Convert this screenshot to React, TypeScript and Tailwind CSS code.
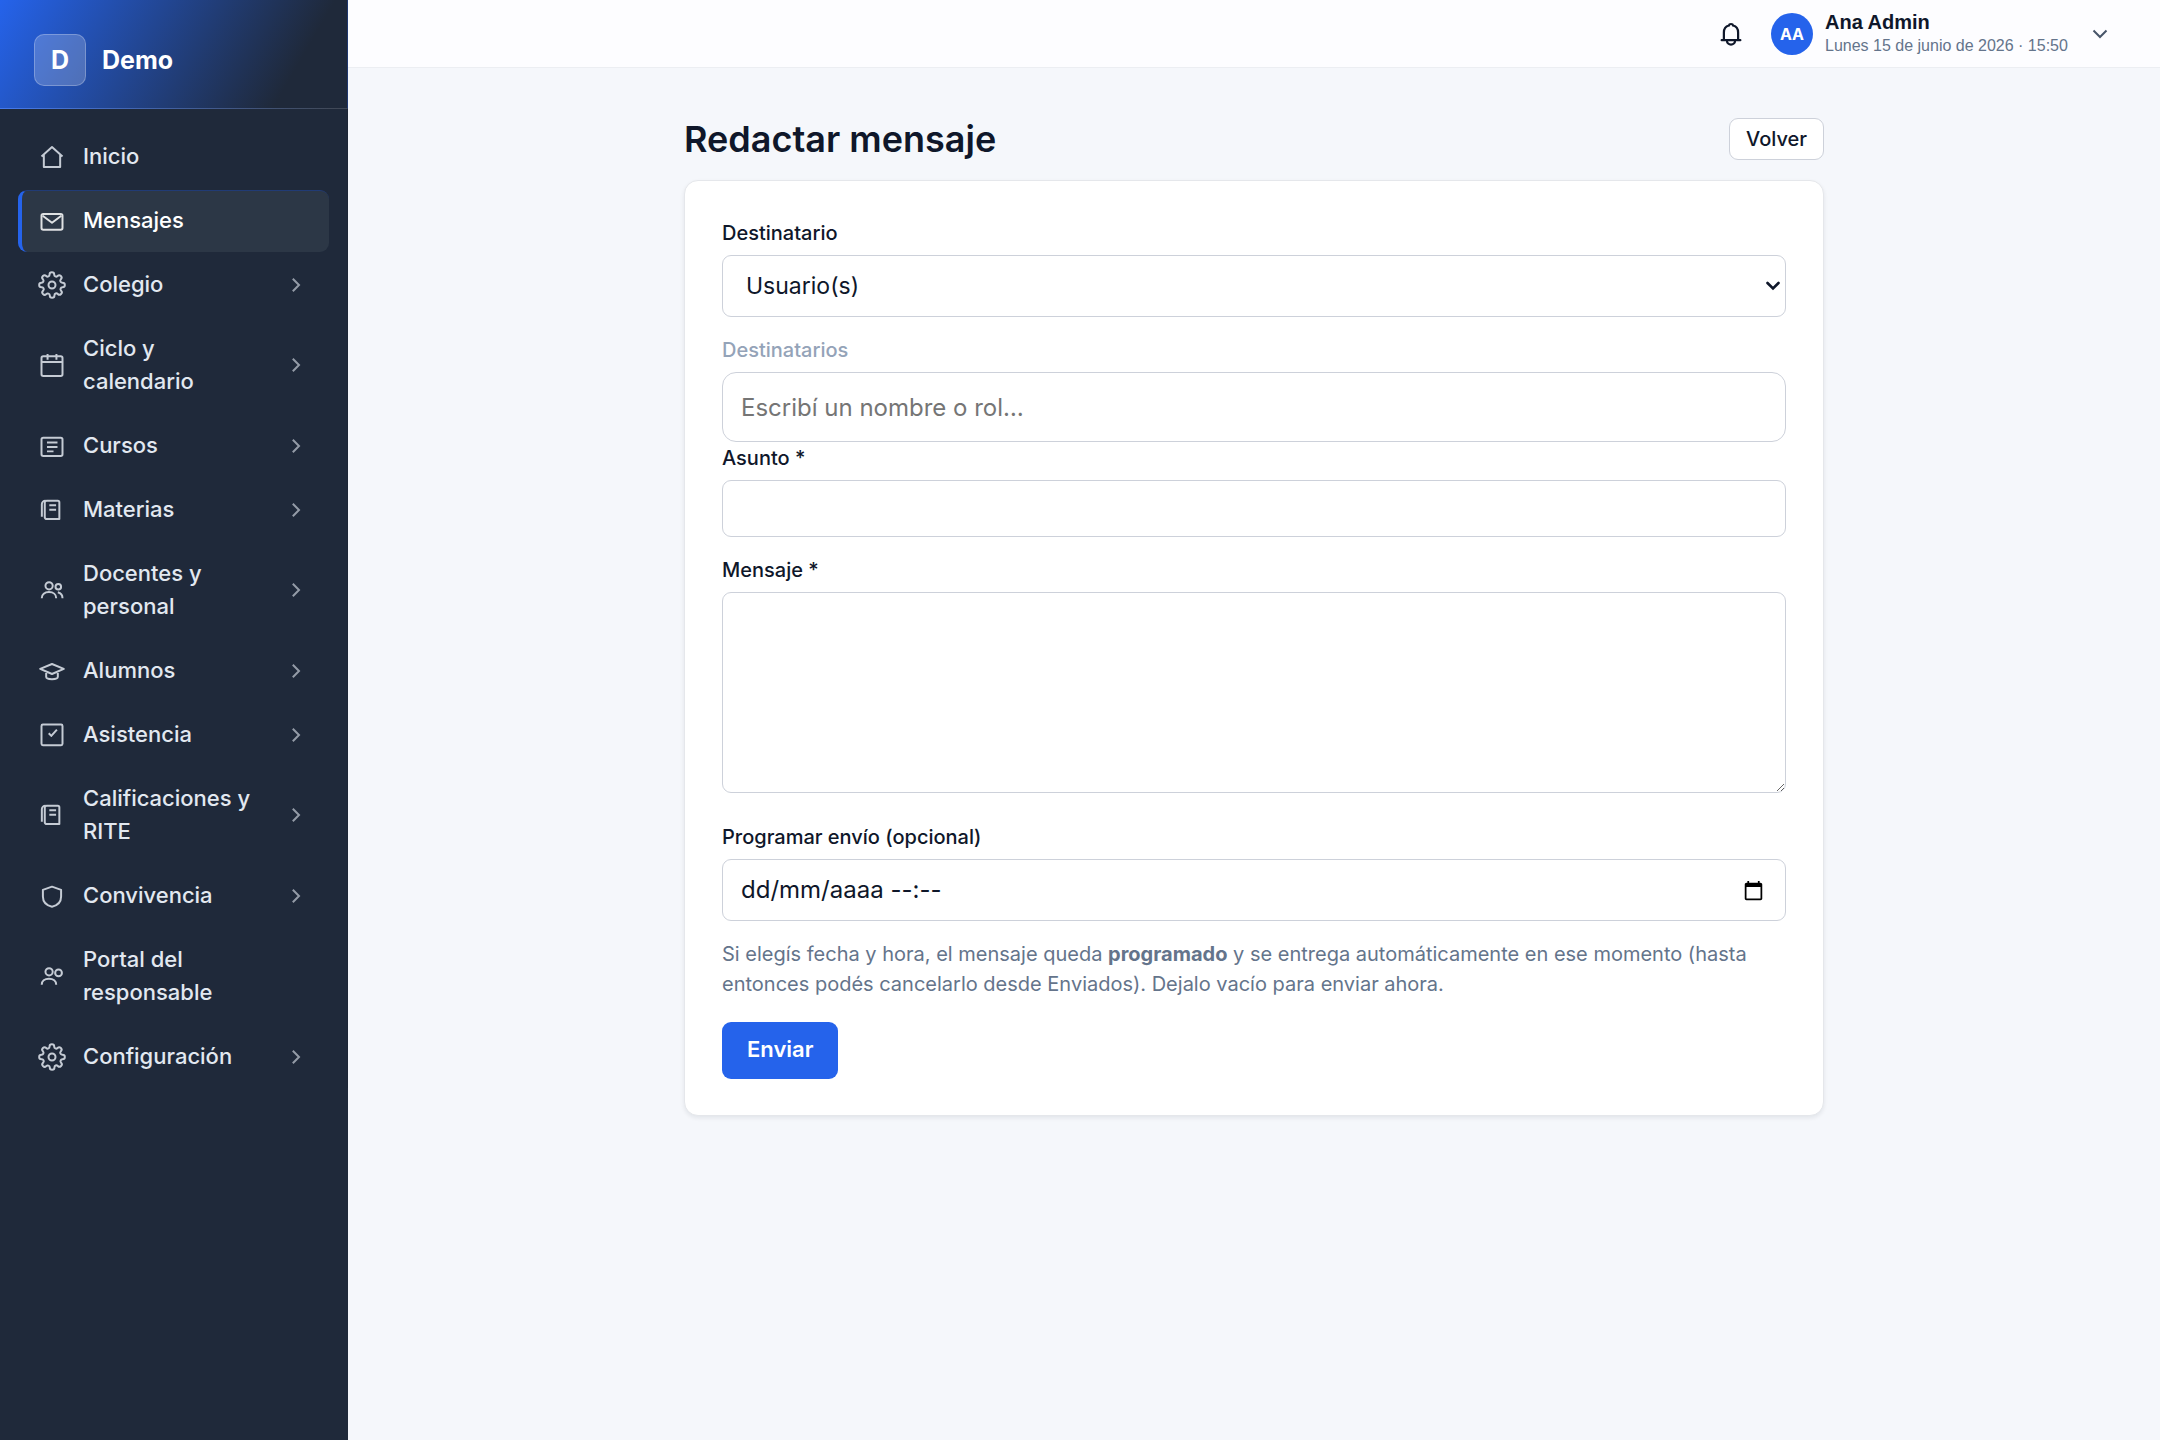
import React from 'react'

type IconName =
  | 'home' | 'mail' | 'gear' | 'calendar' | 'list' | 'book'
  | 'users' | 'cap' | 'check' | 'shield' | 'guardian'

const icons: Record<IconName, React.ReactNode> = {
  home: <path d="M3 11.5 12 3.5l9 8M5 10v10.5h14V10" />,
  mail: (
    <>
      <rect x="3" y="6" width="18" height="13.5" rx="1.5" />
      <path d="m4 7.5 8 6 8-6" />
    </>
  ),
  gear: (
    <>
      <circle cx="12" cy="12" r="3" />
      <path d="M19.4 15a1.65 1.65 0 0 0 .33 1.82l.06.06a2 2 0 0 1-2.83 2.83l-.06-.06a1.65 1.65 0 0 0-2.8 1.17V21a2 2 0 0 1-4 0v-.09A1.65 1.65 0 0 0 9 19.4a1.65 1.65 0 0 0-1.82.33l-.06.06a2 2 0 0 1-2.83-2.83l.06-.06A1.65 1.65 0 0 0 3.09 14H3a2 2 0 0 1 0-4h.09A1.65 1.65 0 0 0 4.6 9a1.65 1.65 0 0 0-.33-1.82l-.06-.06a2 2 0 0 1 2.83-2.83l.06.06A1.65 1.65 0 0 0 9.9 3.09V3a2 2 0 0 1 4 0v.09a1.65 1.65 0 0 0 2.8 1.26l.06-.06a2 2 0 0 1 2.83 2.83l-.06.06a1.65 1.65 0 0 0 1.18 2.82H21a2 2 0 0 1 0 4h-.09a1.65 1.65 0 0 0-1.51 1z" />
    </>
  ),
  calendar: (
    <>
      <rect x="3" y="4.5" width="18" height="17" rx="1.5" />
      <path d="M3 9.5h18M8.2 2.5v5M15.8 2.5v5" />
    </>
  ),
  list: (
    <>
      <rect x="3" y="5" width="18" height="15.5" rx="1.5" />
      <path d="M7.7 9h9M7.7 12.8h9M7.7 16.6h5.6" />
    </>
  ),
  book: (
    <>
      <path d="M7.5 4H17a1.3 1.3 0 0 1 1.3 1.3v14.5H7.5A1.7 1.7 0 0 1 5.8 18V5.7A1.7 1.7 0 0 1 7.5 4z" />
      <path d="M6.5 4A3 3 0 0 0 3.3 7v10.8M9.7 8h5.8M9.7 11.8h5.8" />
    </>
  ),
  users: (
    <>
      <circle cx="9.5" cy="8.4" r="3.1" />
      <circle cx="17.4" cy="9.2" r="2.4" />
      <path d="M3.2 19c0-3.2 2.5-5.2 6.2-5.2s6.2 2 6.2 5.2M17 14c2.3.6 4 2.3 4 5" />
    </>
  ),
  cap: <path d="M12 6 1.9 10.2 12 14.6 22.1 10.2zM7 12.6V17c0 2.8 10 2.8 10 0v-4.4" />,
  check: (
    <>
      <rect x="3" y="3" width="18" height="17.8" rx="1.2" />
      <path d="m9.2 10.5 2.2 2.3 4.8-5.4" />
    </>
  ),
  shield: (
    <path d="M12 4l7.8 2.7v5.8c0 4.8-3.3 7.7-7.8 8.7-4.5-1-7.8-3.9-7.8-8.7V6.7z" />
  ),
  guardian: (
    <>
      <circle cx="9.5" cy="8.4" r="3.1" />
      <circle cx="17.6" cy="9.4" r="2.9" />
      <path d="M3.2 19.5c0-3.2 2.5-5.2 6.2-5.2s6.2 2 6.2 5.2" />
    </>
  ),
}

const menu: { label: string; icon: IconName; active?: boolean; sub?: boolean }[] = [
  { label: 'Inicio', icon: 'home' },
  { label: 'Mensajes', icon: 'mail', active: true },
  { label: 'Colegio', icon: 'gear', sub: true },
  { label: 'Ciclo y calendario', icon: 'calendar', sub: true },
  { label: 'Cursos', icon: 'list', sub: true },
  { label: 'Materias', icon: 'book', sub: true },
  { label: 'Docentes y personal', icon: 'users', sub: true },
  { label: 'Alumnos', icon: 'cap', sub: true },
  { label: 'Asistencia', icon: 'check', sub: true },
  { label: 'Calificaciones y RITE', icon: 'book', sub: true },
  { label: 'Convivencia', icon: 'shield', sub: true },
  { label: 'Portal del responsable', icon: 'guardian' },
  { label: 'Configuración', icon: 'gear', sub: true },
]

const Sidebar = () => {
  return (
    <aside className="w-[348px] shrink-0 bg-[#1f293a] text-[#e2e8f0]">
      <div className="flex items-center gap-4 border-r border-b border-r-[#20386f] border-b-white/15 bg-[linear-gradient(120deg,#2563eb_0%,#1f293a_82%)] px-[34px] pt-[34px] pb-[22px]">
        <span className="flex size-[52px] items-center justify-center rounded-[10px] border border-white/25 bg-white/20 pt-px text-[25px] font-bold text-white">
          D
        </span>
        <span className="pt-px text-[25px] font-bold text-white">Demo</span>
      </div>

      <nav className="flex flex-col gap-[2px] border-r border-[#1d2636] px-[18px] pt-[17px]">
        {menu.map((item) => (
          <a
            key={item.label}
            href="#"
            className={
              item.active
                ? 'flex items-center gap-[17px] rounded-[9px] border-t border-l-4 border-t-[#213b75] border-l-[#2563eb] bg-[#2c3746] pt-[13px] pr-[15px] pb-[15px] pl-4 text-[22px] leading-[33px] font-medium text-white'
                : 'flex items-center gap-[17px] rounded-[9px] border-t border-l-4 border-transparent pt-[13px] pr-[15px] pb-[15px] pl-4 text-[22px] leading-[33px] font-medium'
            }
          >
            <svg
              viewBox="0 0 24 24"
              className="size-7 shrink-0 opacity-85"
              fill="none"
              stroke="currentColor"
              strokeWidth="1.7"
              strokeLinejoin="round"
            >
              {icons[item.icon]}
            </svg>
            <span className="flex-1">{item.label}</span>
            {item.sub && (
              <span className="flex w-9 shrink-0 justify-center">
                <svg viewBox="0 0 16 16" className="size-4 opacity-60" fill="none" stroke="currentColor" strokeWidth="2">
                  <path d="M4.8 1.8 11 8l-6.2 6.2" />
                </svg>
              </span>
            )}
          </a>
        ))}
      </nav>
    </aside>
  )
}

const Topbar = () => {
  return (
    <header className="flex h-[68px] items-center justify-end border-b border-[#eceef2] bg-[#fdfdff] pr-[52px]">
      <button type="button" aria-label="Notificaciones" className="mr-[26px]">
        <svg viewBox="0 0 24 24" className="size-7" fill="none" stroke="currentColor" strokeWidth="1.9" strokeLinecap="round">
          <path d="M4 17.3h16M5.9 17v-6.3c0-3 1.8-5.4 4.3-6 .3-1.7 3.3-1.7 3.6 0 2.5.6 4.3 3 4.3 6V17M8.5 17.5c0 4.7 7 4.7 7 0" />
        </svg>
      </button>
      <button type="button" className="flex items-center text-left">
        <span className="flex size-[42px] items-center justify-center rounded-full bg-[#2563eb] text-[16px] font-bold text-white">
          AA
        </span>
        <span className="ml-3 flex w-[251px] flex-col font-['Liberation_Sans',Arial,sans-serif]">
          <span className="text-[20px] leading-6 font-bold">Ana Admin</span>
          <span className="text-[16px] leading-6 text-[#64748b]">Lunes 15 de junio de 2026 · 15:50</span>
        </span>
        <svg viewBox="0 0 16 16" className="ml-4 size-4 text-[#475569]" fill="none" stroke="currentColor" strokeWidth="2">
          <path d="m1.5 4.5 6.5 6.5 6.5-6.5" />
        </svg>
      </button>
    </header>
  )
}

const ComposeForm = () => {
  const label = 'mb-[7px] block text-[20px] leading-[30px] font-medium'
  const field = 'block w-full rounded-[9px] border border-[#cdd1da] bg-white'

  return (
    <form className="rounded-[14px] border border-[#e5e7eb] bg-white px-[37px] pt-[37px] pb-9 shadow-[0_2px_4px_rgba(15,23,42,0.08)]">
      <label htmlFor="tipo" className={label}>Destinatario</label>
      <div className="relative mb-[18px]">
        <select id="tipo" className={`${field} h-[62px] appearance-none px-[23px] text-[23px]`}>
          <option>Usuario(s)</option>
        </select>
        <svg
          viewBox="0 0 16 16"
          className="pointer-events-none absolute top-1/2 right-[5px] size-4 -translate-y-1/2"
          fill="none"
          stroke="currentColor"
          strokeWidth="2.6"
          strokeLinecap="round"
        >
          <path d="M2.5 5 8 10.5 13.5 5" />
        </svg>
      </div>

      <label htmlFor="destinatarios" className={`${label} text-[#94a3b8]`}>Destinatarios</label>
      <input
        id="destinatarios"
        type="text"
        placeholder="Escribí un nombre o rol…"
        className="mb-px block h-[70px] w-full rounded-[14px] border border-[#cdd1da] bg-white px-[18px] text-[24px] placeholder:text-[#757575]"
      />

      <label htmlFor="asunto" className={label}>Asunto *</label>
      <input id="asunto" type="text" className={`${field} mb-[18px] h-[57px] px-[18px] text-[23px]`} />

      <label htmlFor="mensaje" className={label}>Mensaje *</label>
      <textarea id="mensaje" className={`${field} mb-[29px] h-[201px] resize-y px-[18px] py-3 text-[23px]`} />

      <label htmlFor="programar" className={label}>Programar envío (opcional)</label>
      <div className="mb-[18px] flex h-[62px] items-center rounded-[9px] border border-[#cdd1da] bg-white pr-[21px] pl-[18px]">
        <input
          id="programar"
          type="text"
          placeholder="dd/mm/aaaa --:--"
          className="min-w-0 flex-1 text-[24px] outline-none placeholder:text-[#0f172a]"
        />
        <svg viewBox="0 0 24 24" className="size-[21px] shrink-0 text-black" fill="currentColor">
          <path d="M20 3h-1V1h-2v2H7V1H5v2H4c-1.1 0-2 .9-2 2v16c0 1.1.9 2 2 2h16c1.1 0 2-.9 2-2V5c0-1.1-.9-2-2-2zm0 18H4V8h16v13z" />
        </svg>
      </div>

      <p className="mb-[23px] text-[20px] leading-[30px] text-[#64748b]">
        Si elegís fecha y hora, el mensaje queda <strong>programado</strong> y se entrega automáticamente en ese momento
        (hasta entonces podés cancelarlo desde Enviados). Dejalo vacío para enviar ahora.
      </p>

      <button type="button" className="block h-[57px] rounded-[9px] bg-[#2563eb] px-[25px] pb-[3px] text-[22px] font-semibold text-white">
        Enviar
      </button>
    </form>
  )
}

const App = () => {
  return (
    <div className="flex min-h-screen bg-[#f5f7fb] font-[Inter,sans-serif] text-[#0f172a]">
      <Sidebar />
      <div className="min-w-0 flex-1">
        <Topbar />
        <main className="mx-auto max-w-[1140px] pt-[50px]">
          <div className="mb-5 flex items-center justify-between">
            <h1 className="text-[36px] leading-[42px] font-semibold">Redactar mensaje</h1>
            <button type="button" className="h-[42px] rounded-[9px] border border-[#cdd1da] bg-white px-4 text-[20px] font-medium">
              Volver
            </button>
          </div>
          <ComposeForm />
        </main>
      </div>
    </div>
  )
}

export default App
